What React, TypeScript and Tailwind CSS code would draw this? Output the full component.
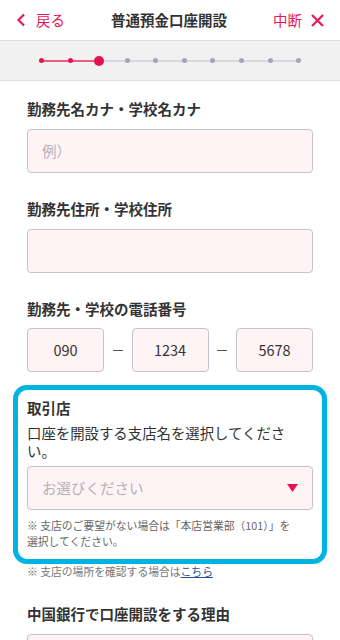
import { type ReactNode } from "react";

const font = { fontFamily: '"Noto Sans CJK JP", "Noto Sans", sans-serif' };

const steps = 10;
const current = 2;

const Label = ({ children }: { children: ReactNode }) => (
  <p className="text-[14.5px] font-bold leading-[20px] text-[#333]">{children}</p>
);

const Field = ({ placeholder, value, className = "" }: { placeholder?: string; value?: string; className?: string }) => (
  <div
    className={`flex h-[44px] items-center rounded-[4px] border border-[#c5c2cd] bg-[#fff4f5] text-[14.5px] ${className}`}
  >
    {value ? (
      <span className="w-full text-center text-[#333]">{value}</span>
    ) : (
      <span className="pl-[14px] text-[#b3b0b8]">{placeholder}</span>
    )}
  </div>
);

const Dash = () => (
  <div className="flex flex-1 justify-center">
    <span className="h-[1px] w-[10px] bg-[#555]" />
  </div>
);

export default function App() {
  return (
    <div className="min-h-[640px] w-[340px] overflow-hidden bg-white" style={font}>
      <header className="flex h-[41px] items-center justify-between border-b border-[#dcdcdc] px-[16px]">
        <div className="flex items-center gap-[10px] text-[#e6175a]">
          <svg width="10" height="14" viewBox="0 0 10 14" fill="none">
            <path d="M8 1.5 2.5 7 8 12.5" stroke="#e6175a" strokeWidth="2.2" />
          </svg>
          <span className="text-[14.5px]">戻る</span>
        </div>
        <h1 className="text-[14.5px] font-bold text-[#333]">普通預金口座開設</h1>
        <div className="flex items-center gap-[9px] text-[#e6175a]">
          <span className="text-[14.5px]">中断</span>
          <svg width="13" height="13" viewBox="0 0 13 13" fill="none">
            <path d="M1 1l11 11M12 1 1 12" stroke="#e6175a" strokeWidth="2.2" />
          </svg>
        </div>
      </header>

      <div className="flex h-[40px] items-center border-b border-[#dedede] bg-[#f1f1f1]">
        <div className="mx-auto flex w-[257px] items-center">
          {Array.from({ length: steps }).map((_, i) => (
            <div key={i} className={`flex items-center ${i < steps - 1 ? "flex-1" : ""}`}>
              <div className="relative flex w-0 items-center justify-center">
                <span
                  className={`absolute rounded-full ${
                    i === current
                      ? "h-[10px] w-[10px] bg-[#e6124f]"
                      : i < current
                        ? "h-[5px] w-[5px] bg-[#e6124f]"
                        : "h-[5px] w-[5px] bg-[#a3a5b6]"
                  }`}
                />
              </div>
              {i < steps - 1 && (
                <div className={`h-[2px] flex-1 ${i < current ? "bg-[#ee5d84]" : "bg-[#d8d8de]"}`} />
              )}
            </div>
          ))}
        </div>
      </div>

      <main className="px-[27px] pt-[18px]">
        <Label>勤務先名カナ・学校名カナ</Label>
        <Field className="mt-[10px]" placeholder="例）" />

        <div className="mt-[26px]">
          <Label>勤務先住所・学校住所</Label>
        </div>
        <Field className="mt-[10px]" />

        <div className="mt-[26px]">
          <Label>勤務先・学校の電話番号</Label>
        </div>
        <div className="mt-[9px] flex items-center">
          <Field className="w-[77px]" value="090" />
          <Dash />
          <Field className="w-[77px]" value="1234" />
          <Dash />
          <Field className="w-[77px]" value="5678" />
        </div>

        <section className="-mx-[14px] mt-[13px] rounded-[14px] border-[5px] border-[#00b4e1] px-[9px] pb-[10px] pt-[8px]">
          <Label>取引店</Label>
          <p className="mt-[6px] w-[265px] text-[14.4px] leading-[18px] text-[#333]">
            口座を開設する支店名を選択してください。
          </p>
          <div className="mt-[6px] flex h-[44px] items-center justify-between rounded-[4px] border border-[#c5c2cd] bg-[#fff4f5] pl-[14px] pr-[14px]">
            <span className="text-[14.5px] text-[#b3b0b8]">お選びください</span>
            <svg width="11" height="8" viewBox="0 0 11 8">
              <path d="M0 0h11L5.5 8z" fill="#e6124f" />
            </svg>
          </div>
          <p className="mt-[8px] text-[10.8px] leading-[15.5px] text-[#666]">
            ※ 支店のご要望がない場合は「本店営業部（101）」を
            <br />
            選択してください。
          </p>
        </section>

        <p className="text-[10.8px] leading-[15px] text-[#777]">
          ※ 支店の場所を確認する場合は
          <span className="text-[#2a4f9b] underline">こちら</span>
        </p>

        <div className="mt-[25px]">
          <Label>中国銀行で口座開設をする理由</Label>
        </div>
        <Field className="mt-[10px]" />
      </main>
    </div>
  );
}
